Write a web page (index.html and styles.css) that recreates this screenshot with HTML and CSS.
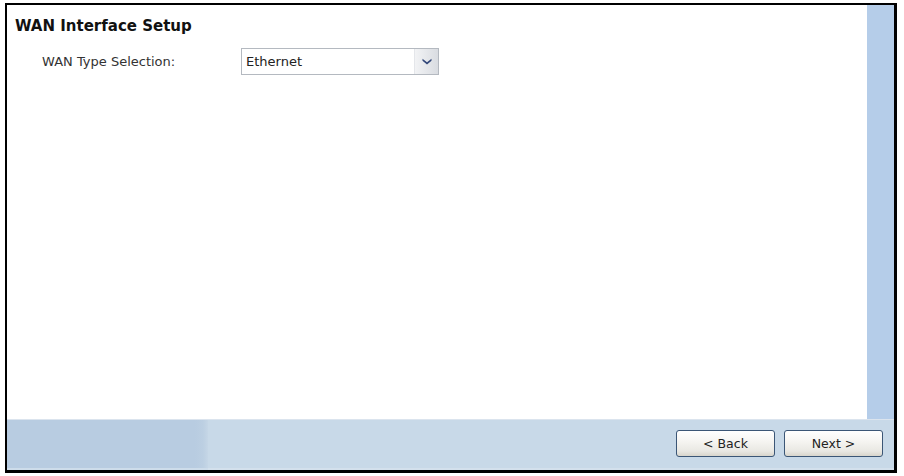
FILE: index.html
```html
<!DOCTYPE html>
<html>
<head>
<meta charset="utf-8">
<link rel="stylesheet" href="styles.css">
</head>
<body>
<div class="frame">
  <div class="main">
    <div class="content">
      <div class="title">WAN Interface Setup</div>
      <div class="row">
        <div class="label">WAN Type Selection:</div>
        <div class="select">
          <span class="select-text">Ethernet</span>
          <span class="select-btn">
            <svg width="10" height="7" viewBox="0 0 10 7"><path d="M0.5 0.8 L5 4.2 L9.5 0.8 L9.5 2.8 L5 6.4 L0.5 2.8 Z" fill="#33487a"/></svg>
          </span>
        </div>
      </div>
    </div>
    <div class="strip"></div>
  </div>
  <div class="footer">
    <div class="footer-left"></div>
    <div class="footer-right">
      <button class="btn">&lt; Back</button>
      <button class="btn">Next &gt;</button>
    </div>
  </div>
</div>
</body>
</html>
```
FILE: styles.css
```css
html, body {
  margin: 0;
  padding: 0;
  background: #ffffff;
}
body {
  font-family: "DejaVu Sans", Verdana, sans-serif;
  color: #222;
}
.frame {
  margin: 3px 0 0 5px;
  width: 887px;
  height: 465px;
  border: 2px solid #000;
  border-right-width: 3px;
  border-bottom-width: 3px;
  display: flex;
  flex-direction: column;
  box-sizing: content-box;
}
.main {
  flex: 1;
  display: flex;
  min-height: 0;
}
.content {
  flex: 1;
  padding: 12px 0 0 8px;
}
.strip {
  width: 27px;
  background: #b5cde9;
}
.title {
  font-weight: bold;
  font-size: 15px;
  line-height: 18px;
  color: #111;
}
.row {
  display: flex;
  align-items: center;
  margin-top: 13px;
  padding-left: 27px;
}
.label {
  width: 199px;
  font-size: 13px;
  color: #333;
}
.select {
  width: 196px;
  height: 25px;
  border: 1px solid #b4b9c0;
  display: flex;
  align-items: center;
  box-sizing: content-box;
  background: #fff;
}
.select-text {
  flex: 1;
  font-size: 13px;
  padding-left: 4px;
  color: #222;
}
.select-btn {
  width: 23px;
  height: 25px;
  display: flex;
  align-items: center;
  justify-content: center;
  background: linear-gradient(to right, #f2f3f5, #d9dce1);
  border-left: 1px solid #e4e6ea;
}
.footer {
  height: 51px;
  display: flex;
  border-top: 1px solid #dbe4ee;
  box-sizing: border-box;
}
.footer-left {
  width: 201px;
  background: linear-gradient(to right, #b8cce1 0, #b8cce1 188px, #bccfe2 196px, #c5d6e6 201px);
  box-shadow: inset 0 -5px 0 -3px #cddcea;
}
.footer-right {
  flex: 1;
  background: #c8d9e8;
  display: flex;
  justify-content: flex-end;
  align-items: center;
  gap: 9px;
  padding: 0 11px 3px 0;
  box-shadow: inset 0 -5px 0 -3px #d3e0ec;
}
.btn {
  width: 99px;
  height: 27px;
  font-family: "DejaVu Sans", Verdana, sans-serif;
  font-size: 12.5px;
  color: #222;
  border: 1px solid #3b5676;
  border-radius: 3px;
  background: linear-gradient(to bottom, #ffffff 0%, #f6f5f2 40%, #e9e8e3 80%, #d8d5cc 100%);
  padding: 0;
}
```
